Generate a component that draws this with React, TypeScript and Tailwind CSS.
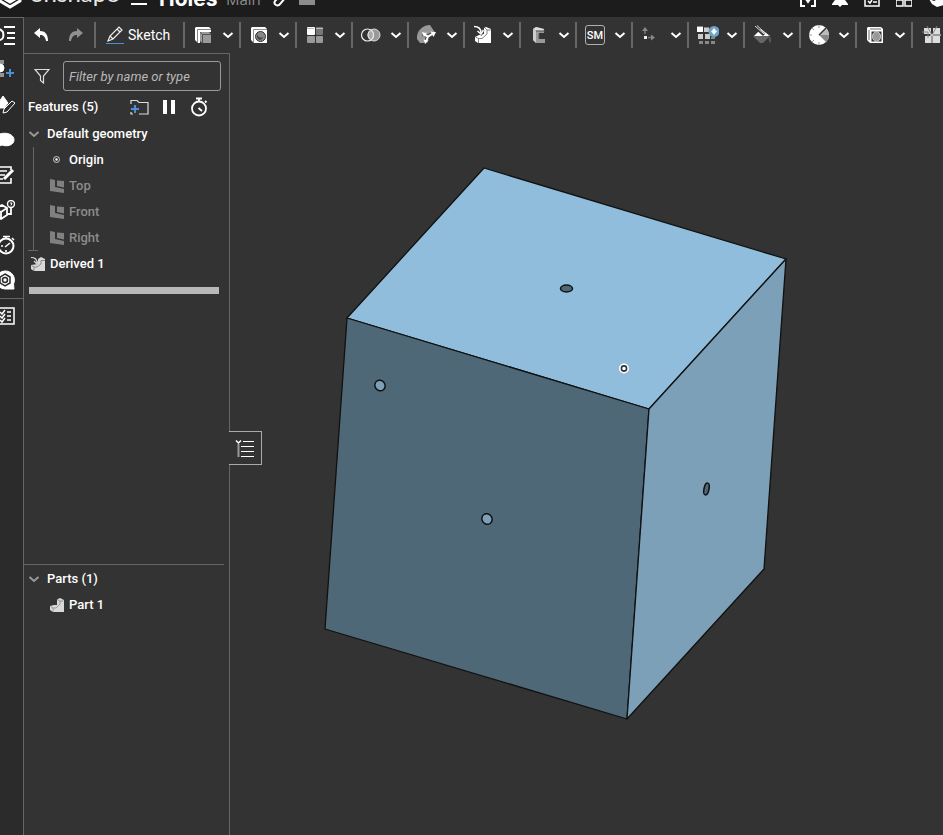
import { ReactNode } from "react";

type Tool = { name: string; icon: ReactNode };

const Chevron = ({ className }: { className: string }) => (
  <svg viewBox="0 0 12 12" className={className} fill="none" stroke="currentColor" strokeWidth="2">
    <path d="M1.5 4 L6 8 L10.5 4" />
  </svg>
);

const ToolIcon = ({ children }: { children: ReactNode }) => (
  <svg viewBox="0 0 24 24" className="size-6 shrink-0" fill="none">
    {children}
  </svg>
);

const tools: Tool[] = [
  {
    name: "Extrude",
    icon: (
      <ToolIcon>
        <path d="M4 5 L5 4 H18 L20 6 V9 H9 V20 H7 L4 17Z" fill="#fff" />
        <path d="M6.5 20 V6.500 H20" stroke="#666" strokeWidth="0.800" />
        <path d="M9 9 H18 L20 11 V20 H11 L9 18Z" fill="#999" />
        <path d="M9 9 L11.500 11.500 H20 M11.500 11.500 V20" stroke="#555" />
      </ToolIcon>
    ),
  },
  {
    name: "Hole",
    icon: (
      <ToolIcon>
        <path d="M4 5 L5 4 H18 L20 6 V20 H7 L4 17Z" fill="#fff" />
        <path d="M6.500 20 V6.500 H20" stroke="#777" strokeWidth="0.800" />
        <circle cx="13.500" cy="13.500" r="5" fill="#888" stroke="#333" />
        <path d="M10.500 11 A3.500 3.500 0 0 0 16 14 A4 4 0 0 0 16 10 A5 5 0 0 1 13 17 A4 4 0 0 1 10.500 11" fill="#444" />
      </ToolIcon>
    ),
  },
  {
    name: "Pattern",
    icon: (
      <ToolIcon>
        <rect x="4" y="4" width="8" height="8" rx="1" fill="#fff" />
        <rect x="13" y="4" width="7" height="8" rx="1" fill="#777" />
        <rect x="4" y="13" width="8" height="7" rx="1" fill="#999" />
        <rect x="13" y="13" width="7" height="7" rx="1" fill="#999" />
        <path d="M4 5.5 H11 M13 5.5 H20" stroke="#bbb" />
      </ToolIcon>
    ),
  },
  {
    name: "Boolean",
    icon: (
      <ToolIcon>
        <circle cx="15" cy="12" r="6" fill="#999" stroke="#ddd" />
        <circle cx="8.500" cy="12" r="6" stroke="#eee" strokeWidth="1.200" />
        <path d="M11.750 7 A6 6 0 0 1 11.750 17 A6 6 0 0 1 11.750 7" fill="#aaa" stroke="#eee" />
      </ToolIcon>
    ),
  },
  {
    name: "Surface",
    icon: (
      <ToolIcon>
        <path d="M2 16 C1 8 8 2 15 2 L19 8 V11 L14 13 L9 20 H5Z" fill="#999" />
        <path d="M8 11 L13 13.500 L19 10 M13 13.500 L11 20" stroke="#444" strokeWidth="4" />
        <path d="M9 11.500 L13 13.500 L18 10.500 M13 13.500 L11 19" stroke="#fff" strokeWidth="2" />
        <path d="M7 9 L12 10 L9 14Z M15.500 8.500 L21 9 L18.500 14Z M8.500 16.500 L13.500 17.500 L10 21Z" fill="#fff" />
      </ToolIcon>
    ),
  },
  {
    name: "Derived",
    icon: (
      <ToolIcon>
        <path d="M13 5 L15 4 L20 6 V20 H7 L4 18 V14 L8 12 L13 11Z" fill="#fff" />
        <path d="M4.500 14 L7.500 15.500 H11 L16 11 V7 H20 M7.500 15.500 V20 M14 5 L16 7" stroke="#666" strokeWidth="0.800" />
        <path d="M4 4 C8 4 10 6 10 9" stroke="#333" strokeWidth="3.500" />
        <path d="M6 8.500 L10.500 13 L13.500 7" fill="#333" />
        <path d="M3 3.500 C8 3.500 10 6 10 10" stroke="#fff" strokeWidth="1.500" />
        <path d="M6.500 8 L10 11 L12.500 7" stroke="#fff" strokeWidth="1.500" />
      </ToolIcon>
    ),
  },
  {
    name: "Frame",
    icon: (
      <ToolIcon>
        <path d="M6 6 L9 4 L17 6 V10 H12 V16 H18 V20 H9 L6 17Z" fill="#999" />
        <path d="M6 6 L9 4 L17 6 L16 8 L9 7.500Z" fill="#ddd" />
        <path d="M6 6 L9 8 V20 L6 17Z" fill="#ccc" />
        <path d="M9 8 H18 M12 11 V16" stroke="#555" />
      </ToolIcon>
    ),
  },
  {
    name: "Sheet metal",
    icon: (
      <span className="mx-[2px] flex size-5 shrink-0 items-center justify-center rounded-[3px] border border-[#b0b0b0] text-[11px] font-medium leading-none">
        SM
      </span>
    ),
  },
  {
    name: "Mate connector",
    icon: (
      <ToolIcon>
        <path d="M6 7 V11 M9 14.500 H13" stroke="#777" strokeWidth="1.500" />
        <path d="M3 8 L6 4 L9 8Z M12 11.500 L16 14.500 L12 17.500Z" fill="#888" />
        <rect x="5" y="13" width="3" height="3" fill="#eee" />
      </ToolIcon>
    ),
  },
  {
    name: "Configured pattern",
    icon: (
      <ToolIcon>
        <path d="M2 3 H8 V9 H2Z" fill="#fff" />
        <path d="M9 4 H14 V9 H9Z M3 11 H8 V16 H3Z M10 11 H15 V16 H10Z" fill="#ccc" />
        <path d="M2 3.500 H8 M9 4.500 H14" stroke="#888" />
        <path d="M4 18 H8 V21 H4Z M10 18 H14 V21 H10Z M16 18 H20 V21 H16Z M16 14 H20 V16 H16Z" fill="#888" />
        <circle cx="19" cy="8.500" r="5.500" fill="#6fa3c7" />
        <path d="M19 5 L20.500 7 L22 8.500 L20.500 10 L19 12 L17.500 10 L16 8.500 L17.500 7Z" fill="#fff" />
      </ToolIcon>
    ),
  },
  {
    name: "Appearance",
    icon: (
      <ToolIcon>
        <path d="M3 13 L10 6 L19 13Z" fill="#fff" />
        <path d="M2 13 H19 L12 20 H9Z" fill="#666" />
        <path d="M17 12 L20 15 V20 L18 19Z" fill="#555" />
        <path d="M4 4 L13 12" stroke="#333" strokeWidth="3" />
        <path d="M4 3 L13 11 M6 2.500 L14 10" stroke="#ddd" />
      </ToolIcon>
    ),
  },
  {
    name: "Section view",
    icon: (
      <ToolIcon>
        <circle cx="12" cy="12" r="10" fill="#fff" />
        <path d="M12 12 L19 5 A10 10 0 0 1 22 12Z" fill="#bbb" />
        <path d="M12 12 L22 12 A10 10 0 0 1 19 19Z" fill="#888" />
        <path d="M12 12 L19 5" stroke="#333" strokeWidth="1.500" />
        <path d="M12 2 V5 M12 19 V22 M2 12 H5 M5 5 L7 7 M5 19 L7 17" stroke="#999" />
      </ToolIcon>
    ),
  },
  {
    name: "Thicken",
    icon: (
      <ToolIcon>
        <path d="M4 5 L5 4 H18 L20 6 V20 H7 L4 17Z" fill="#fff" />
        <path d="M8.500 8.500 H18.500 V18.500 H8.500Z" fill="#333" />
        <path d="M6 17 V7 M7 6 H18" stroke="#444" strokeWidth="0.800" />
        <ellipse cx="13.500" cy="13.500" rx="4" ry="5" fill="#999" stroke="#ccc" />
      </ToolIcon>
    ),
  },
  {
    name: "Mirror",
    icon: (
      <ToolIcon>
        <path d="M5 5 H12 V11 H5Z M14 5 H21 V11 H14Z M6 13 H12 V20 H6Z M14 13 H21 V20 H14Z" fill="#ddd" />
        <path d="M3 9 H9 V15 M8 3 L13 12 L18 3" stroke="#888" />
        <path d="M11 12 H22 M13 12 V20" stroke="#fff" />
      </ToolIcon>
    ),
  },
];

const railItems: Tool[] = [
  {
    name: "Feature list",
    icon: <path d="M9 2 H20 M12 8 H20 M12 13 H20 M9 19 H20 M0 15 H4 C8 15 9 12 8 7 L5 4" strokeWidth="2" />,
  },
  {
    name: "Add part",
    icon: (
      <>
        <circle cx="5" cy="8" r="4" fill="#fff" />
        <path d="M4 1 H9 M4 3 H9 M4 14 H9 M4 16 H9" />
        <path d="M15 9 V17 M11 13 H19" stroke="#4a90d9" strokeWidth="2" />
      </>
    ),
  },
  {
    name: "Edit appearance",
    icon: (
      <>
        <path d="M0 13 L8 1 L13 8 L9 13Z" fill="#fff" />
        <path d="M8 18 L9 14 L17 6 L20 8 L12 17Z" fill="#2b2b2b" />
      </>
    ),
  },
  { name: "Comments", icon: <path d="M0 10 C0 1 19 1 19 10 C19 15 12 17 7 15 L2 17 L3 14Z" fill="#fff" /> },
  {
    name: "Notes",
    icon: (
      <>
        <path d="M16 5 V2 H2 V18 H16 V13 M5 6 H12 M5 10 H10 M5 14 H8" strokeWidth="1.600" />
        <path d="M9 14 L18 5" strokeWidth="3" />
      </>
    ),
  },
  {
    name: "Where used",
    icon: (
      <>
        <path d="M0 9 L7 5 L12 8 V15 L6 19 L0 16Z M0 9 L6 12 L12 8 M6 12 V18 M12 14 H16 V7" strokeWidth="1.800" />
        <circle cx="16" cy="4" r="3.500" strokeWidth="1.400" />
        <path d="M15 3 H17 L16 5.500" />
      </>
    ),
  },
  {
    name: "History",
    icon: (
      <>
        <circle cx="11" cy="11" r="7.500" strokeWidth="2" />
        <path d="M8 1.500 H15 M11 1.500 V4 M17 3 L19 5 M10 12 L15 8 M6 11 H8 M11 15 V17" strokeWidth="1.600" />
      </>
    ),
  },
  {
    name: "Learning",
    icon: (
      <>
        <path d="M10 1 A9 9 0 0 1 18.500 14 L19 19 L10 19 A9 9 0 0 1 10 1" fill="#fff" />
        <path d="M10 4 L15 7 V13 L10 16 L5 13 V7Z" stroke="#2b2b2b" strokeWidth="1.500" />
        <circle cx="10" cy="10" r="2.500" stroke="#2b2b2b" strokeWidth="1.500" />
      </>
    ),
  },
];

const RailIcon = ({ children }: { children: ReactNode }) => (
  <svg viewBox="0 0 20 20" className="size-5 shrink-0" fill="none" stroke="#fff">
    {children}
  </svg>
);

const RailButton = ({ name, icon }: Tool) => (
  <button aria-label={name} className="flex h-[35px] shrink-0 items-center justify-end pb-[2px] pr-2">
    <RailIcon>{icon}</RailIcon>
  </button>
);

const PlaneIcon = () => (
  <svg viewBox="0 0 14 14" className="size-[14px]">
    <path d="M0 0 L5 1 V8 L14 10 V14 L0 12Z M7 1.500 L14 2 V8.500 L7 7Z" fill="#808080" />
  </svg>
);

const PartIcon = () => (
  <svg viewBox="0 0 14 14" className="size-[14px]" fill="none">
    <path d="M7 1.500 L10 0 L14 2 V14 H3 L0 12 V8 L4 7 H7Z" fill="#d8d8d8" />
    <path d="M0.500 8.500 L3 10 H6 L10 6 V3 H13.500 M3 10 V13.500 M7 1.500 L10 3" stroke="#888" strokeWidth="0.800" />
  </svg>
);

const DerivedIcon = () => (
  <svg viewBox="0 0 16 16" className="size-4" fill="none">
    <path d="M8 3 L11 1 L15 3 V15 H4 L1 13 V9 L8 8Z" fill="#d8d8d8" />
    <path d="M1.500 9.500 L4 11 H7 L11 8 V4.500 H15 M4 11 V15" stroke="#777" strokeWidth="0.800" />
    <path d="M1 1.500 C5 1.500 7 3 7 6" stroke="#333" strokeWidth="3" />
    <path d="M1 1.500 C5 1.500 7 3 7 7 M4 5 L7 8 L9 4" stroke="#d8d8d8" strokeWidth="1.200" />
  </svg>
);

const planes = ["Top", "Front", "Right"];

const Header = () => (
  <header className="flex h-[17px] shrink-0 items-end overflow-hidden bg-[#1c1c1c]">
    <div className="flex h-9 w-full items-center">
      <svg viewBox="0 0 24 24" className="-ml-[2px] size-6 shrink-0" fill="none" stroke="#fff" strokeWidth="3">
        <path d="M2 4 V14 L12 20 L22 14 V4 M7 6 V12 L12 15 L17 12 V6" />
      </svg>
      <span className="ml-2 w-[88px] pb-3 font-[Lato] text-[24px] leading-7 text-[#e8e8e8]">onshape</span>
      <button aria-label="Main menu" className="ml-[13px] flex h-3 w-4 shrink-0 flex-col justify-between">
        <span className="h-[2px] w-full bg-white" />
        <span className="h-[2px] w-full bg-white" />
      </button>
      <h1 className="ml-3 w-[67px] font-[Inter] text-[21px] font-bold leading-6">Holes</h1>
      <span className="w-[34px] font-['Open_Sans'] text-[15px] leading-6 text-[#8c8c8c]">Main</span>
      <button aria-label="Copy link" className="ml-[13px] shrink-0">
        <svg viewBox="0 0 16 16" className="size-4" fill="none" stroke="#fff" strokeWidth="2">
          <path d="M5 6 L9 2 A2.500 2.500 0 0 1 13 6 L7 13 A2.500 2.500 0 0 1 2 10 L5 7" />
        </svg>
      </button>
      <span className="ml-[10px] h-3 w-4 shrink-0 bg-[#8c8c8c]" />
      <div className="ml-auto flex shrink-0 gap-4 text-white">
        <button aria-label="Variables">
          <svg viewBox="0 0 16 16" className="size-4" fill="none" stroke="currentColor" strokeWidth="2">
            <path d="M4 2 H1 V15 H5 M12 2 H15 V15 H11 M6 8 L8 11 L10 8" />
          </svg>
        </button>
        <button aria-label="Notifications">
          <svg viewBox="0 0 16 16" className="size-4" fill="currentColor">
            <path d="M8 0 C12 0 13 3 13 9 L16 13 V14 H0 V13 L3 9 C3 3 4 0 8 0 M6 14 H10 L8 16Z" />
          </svg>
        </button>
        <button aria-label="Tasks">
          <svg viewBox="0 0 16 16" className="size-4" fill="none" stroke="currentColor" strokeWidth="2">
            <path d="M1 1 H15 V15 H1Z M4 10 L6 12 L8 9 M9 11 H13" strokeWidth="1.500" />
          </svg>
        </button>
        <button aria-label="Applications">
          <svg viewBox="0 0 16 16" className="size-4" fill="none" stroke="currentColor" strokeWidth="1.500">
            <path d="M0 1 H7 V7 H0Z M9 1 H16 V7 H9Z M0 9 H7 V15 H0Z M9 9 H16 V15 H9Z" />
          </svg>
        </button>
        <button aria-label="Account" className="-mr-px">
          <svg viewBox="0 0 16 16" className="size-4" fill="currentColor">
            <path d="M1 8 L6 10 L12 7 L16 8 V14 L9 16 L4 13Z" />
          </svg>
        </button>
      </div>
    </div>
  </header>
);

const Toolbar = () => (
  <div className="flex h-9 shrink-0 items-center overflow-hidden">
    <button aria-label="Undo" className="ml-[9px] shrink-0">
      <svg viewBox="0 0 16 16" className="size-4" fill="#fff">
        <path d="M1 6 L7 1 V4 C12 4 15 7 15 14 H13 C12 9 10 8 7 8 V11Z" />
      </svg>
    </button>
    <button aria-label="Redo" className="ml-[19px] shrink-0">
      <svg viewBox="0 0 16 16" className="size-4" fill="#909090">
        <path d="M15 6 L9 1 V4 C4 4 1 7 1 14 H3 C4 9 6 8 9 8 V11Z" />
      </svg>
    </button>
    <button className="ml-[10px] flex h-[26px] w-[89px] shrink-0 items-center gap-1 border-l-2 border-[#666] pl-[10px] text-[14px]">
      <svg viewBox="0 0 18 20" className="h-5 w-[18px] shrink-0" fill="none" stroke="#eee">
        <path d="M2 16 L4 11 L13 2 L16 5 L7 14Z M4 11 L7 14 M11 4 L14 7" strokeWidth="1.200" />
        <path d="M0 18.500 H18" stroke="#4a90d9" />
      </svg>
      Sketch
    </button>
    {tools.map((tool) => (
      <button
        key={tool.name}
        aria-label={tool.name}
        className="flex h-[26px] w-14 shrink-0 items-center gap-[7px] border-l-2 border-[#666] pl-[6px]"
      >
        {tool.icon}
        <Chevron className="size-3 shrink-0" />
      </button>
    ))}
  </div>
);

const FeaturePanel = () => (
  <aside className="flex w-[206px] shrink-0 flex-col border-r border-t border-[#666] text-[13px] font-medium leading-[26px]">
    <section className="flex flex-[511] flex-col">
      <div className="flex items-center pl-[10px] pr-2 pt-[7px]">
        <svg viewBox="0 0 16 16" className="size-4 shrink-0" fill="none" stroke="#ddd" strokeWidth="1.200">
          <path d="M1 1.500 H15 L9.500 8 V15 L6.500 12.500 V8Z" />
        </svg>
        <input
          aria-label="Filter by name or type"
          placeholder="Filter by name or type"
          className="ml-[13px] h-[30px] w-full min-w-0 rounded-[3px] border border-[#999] bg-transparent px-[5px] text-[13px] font-normal italic placeholder:text-[#b8b8b8]"
        />
      </div>
      <div className="flex items-center pb-px pl-1 pt-[3px]">
        <h2 className="w-[101px]">Features (5)</h2>
        <button aria-label="New folder">
          <svg viewBox="0 0 20 16" className="h-4 w-5" fill="none" stroke="#ddd" strokeWidth="1.200">
            <path d="M2 5 V1.500 H8 L10 3.500 H19 V15 H10 M2 13 V15 H4" />
            <path d="M6 6 V14 M2 10 H10" stroke="#4a90d9" strokeWidth="2" />
          </svg>
        </button>
        <button aria-label="Suspend updates" className="ml-[14px] flex gap-1">
          <span className="h-[14px] w-1 bg-white" />
          <span className="h-[14px] w-1 bg-white" />
        </button>
        <button aria-label="Regeneration times" className="ml-[14px]">
          <svg viewBox="0 0 20 20" className="size-5" fill="none" stroke="#fff" strokeWidth="1.800">
            <circle cx="10" cy="11.500" r="7" />
            <path d="M7 1.500 H13 M10 1.500 V4 M16 4 L17.500 5.500 M9.500 11 L13 14" />
          </svg>
        </button>
      </div>
      <button className="flex items-center gap-[7px] pl-1">
        <Chevron className="size-3 text-[#999]" />
        Default geometry
      </button>
      <div className="flex pl-1">
        <div className="flex w-[10px] flex-col items-center border-b border-[#666]">
          <span className="w-px grow bg-[#666]" />
        </div>
        <ul className="pl-3">
          <li className="flex items-center gap-[5px]">
            <svg viewBox="0 0 14 14" className="size-[14px]" fill="none" stroke="#ccc">
              <circle cx="6.500" cy="6.500" r="3" />
              <circle cx="6.500" cy="6.500" r="1" fill="#fff" />
            </svg>
            Origin
          </li>
          {planes.map((plane) => (
            <li key={plane} className="flex items-center gap-[5px] text-[#8c8c8c]">
              <PlaneIcon />
              {plane}
            </li>
          ))}
        </ul>
      </div>
      <div className="flex items-center gap-1 pl-[6px]">
        <DerivedIcon />
        Derived 1
      </div>
      <div className="ml-[5px] mr-[10px] mt-[10px] h-[7px] bg-[#b8b8b8]" />
    </section>
    <section className="mr-[5px] flex-[271] border-t border-[#666]">
      <button className="flex items-center gap-[7px] pl-1 pt-px">
        <Chevron className="size-3 text-[#999]" />
        Parts (1)
      </button>
      <div className="flex items-center gap-[5px] pl-[26px]">
        <PartIcon />
        Part 1
      </div>
    </section>
  </aside>
);

const Viewport = () => (
  <main className="relative flex min-w-0 flex-1">
    <svg viewBox="230 53 713 782" className="size-full" strokeLinejoin="round">
      <g stroke="#111" strokeWidth="1.300">
        <path d="M484 168 L786 259 L649 409 L347 318Z" fill="#8fbddb" />
        <path d="M347 318 L649 409 L627 719 L325 629Z" fill="#4e6878" />
        <path d="M649 409 L786 259 L764 569 L627 719Z" fill="#7ba0b8" />
      </g>
      <g stroke="#111" strokeWidth="1.500">
        <ellipse cx="566.500" cy="288.500" rx="6" ry="3.500" fill="#4e6878" />
        <ellipse cx="380" cy="385.500" rx="5" ry="5.500" fill="#7ba0b8" transform="rotate(-35 380 385.500)" />
        <ellipse cx="487" cy="519" rx="5" ry="5.500" fill="#7ba0b8" transform="rotate(-35 487 519)" />
        <ellipse cx="706.500" cy="489" rx="2.500" ry="6" fill="#4e6878" transform="rotate(12 706.500 489)" />
      </g>
      <circle cx="624" cy="368.500" r="5" fill="#fff" />
      <circle cx="624" cy="368.500" r="2.600" fill="#fff" stroke="#333" strokeWidth="1.600" />
    </svg>
    <button
      aria-label="Toggle feature list"
      className="absolute -left-px top-[378px] flex h-[34px] w-[33px] items-center justify-center border border-l-0 border-[#aaa] bg-[#333]"
    >
      <svg viewBox="0 0 20 20" className="size-5" fill="none" stroke="#fff">
        <path d="M1 2.500 L3.500 5 L6 2.500" strokeWidth="1.500" />
        <path d="M3.500 6 V19" stroke="#999" strokeWidth="2" />
        <path d="M8 3.500 H19 M6 8.500 H19 M6 13.500 H19 M6 18.500 H19" />
      </svg>
    </button>
  </main>
);

const App = () => {
  return (
    <div className="flex h-screen flex-col overflow-hidden bg-[#333] font-[Roboto,sans-serif] text-white">
      <Header />
      <div className="flex min-h-0 flex-1">
        {/* Left rail */}
        <nav className="flex w-6 shrink-0 flex-col overflow-hidden border-r border-t border-[#666] bg-[#2b2b2b]">
          {railItems.map((item) => (
            <RailButton key={item.name} {...item} />
          ))}
          <div className="flex flex-col border-t border-[#666]">
            <RailButton
              name="Custom tables"
              icon={
                <path
                  d="M2 2 H19 V18 H2Z M12 6 H16 M12 10 H16 M12 14 H16 M5 6 L7 8 L10 4 M5 10 L7 12 L10 8 M5 14 L7 16 L10 12"
                  strokeWidth="1.500"
                />
              }
            />
          </div>
        </nav>
        <div className="flex min-w-0 flex-1 flex-col">
          <Toolbar />
          <div className="flex min-h-0 flex-1">
            <FeaturePanel />
            <Viewport />
          </div>
        </div>
      </div>
    </div>
  );
};

export default App;
